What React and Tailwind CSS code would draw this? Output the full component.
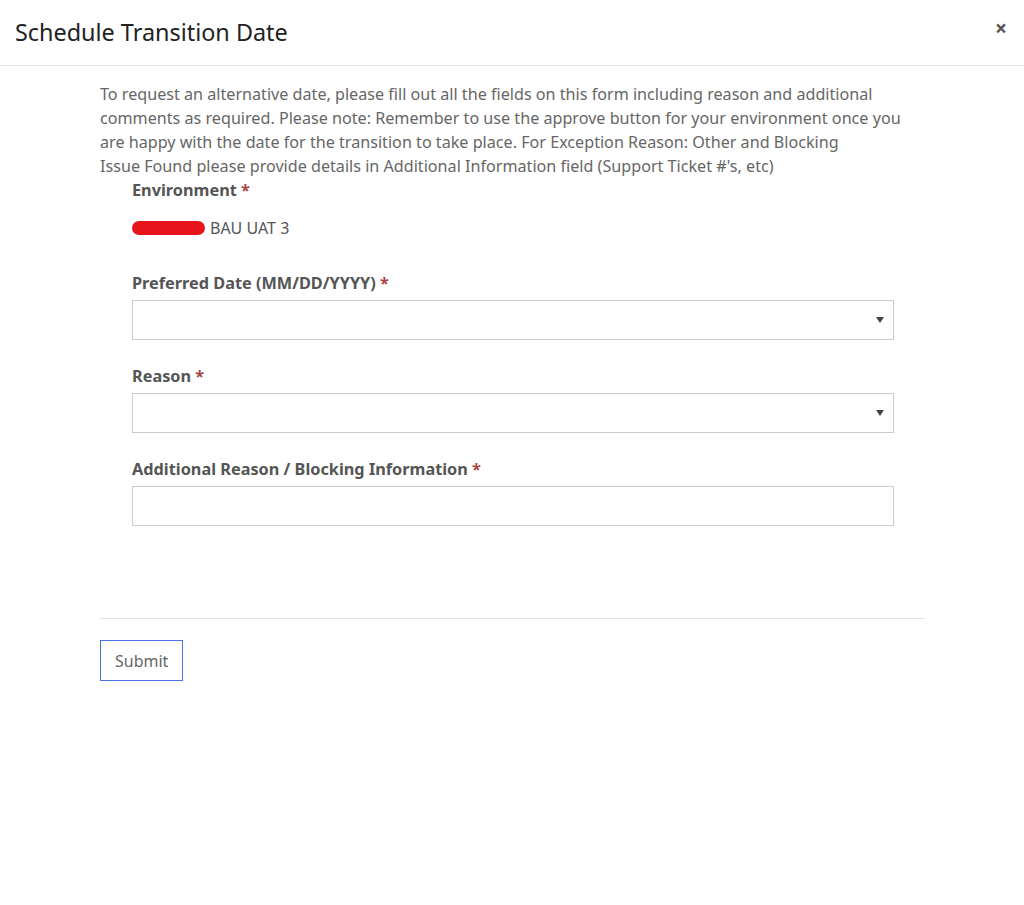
import React from 'react'

const font = { fontFamily: '"Noto Sans", "Open Sans", sans-serif' }

function Label({ children }) {
    return (
        <div className="text-[16.3px] font-bold text-[#555] leading-6">
            {children} <span className="text-[#a94442]">*</span>
        </div>
    )
}

function SelectBox() {
    return (
        <div className="mt-[5px] h-10 w-[762px] border border-[#ccc] bg-white flex items-center justify-end pr-[9px]">
            <svg width="8" height="6" viewBox="0 0 8 6">
                <path d="M0 0 H8 L4 6 Z" fill="#444" />
            </svg>
        </div>
    )
}

export default function App() {
    return (
        <div className="w-[1024px] h-[905px] bg-white relative" style={font}>
            {/* Header */}
            <div className="h-[66px] border-b border-[#e5e5e5] flex items-center justify-between pl-[15px] pr-[17px]">
                <h1 className="text-[23.4px] text-[#222] font-normal leading-none mt-[1px]">Schedule Transition Date</h1>
                <button className="text-[21px] text-[#555] font-bold leading-none -mt-[8px]">×</button>
            </div>

            {/* Body */}
            <div className="pl-[100px] pr-[99px] pt-[16px]">
                <p className="text-[16.15px] leading-6 text-[#666]">
                    To request an alternative date, please fill out all the fields on this form including reason and additional<br />
                    comments as required. Please note: Remember to use the approve button for your environment once you<br />
                    are happy with the date for the transition to take place. For Exception Reason: Other and Blocking<br />
                    Issue Found please provide details in Additional Information field (Support Ticket #'s, etc)
                </p>

                <div className="pl-[32px]">
                    <Label>Environment</Label>
                    <div className="mt-[14px] flex items-center text-[16px] text-[#555] leading-6">
                        <span className="inline-block w-[73px] h-[14px] bg-[#e8141c] rounded-full mr-[5px]" />
                        BAU UAT 3
                    </div>

                    <div className="mt-[31px]">
                        <Label>Preferred Date (MM/DD/YYYY)</Label>
                        <SelectBox />
                    </div>

                    <div className="mt-[24px]">
                        <Label>Reason</Label>
                        <SelectBox />
                    </div>

                    <div className="mt-[24px]">
                        <Label>Additional Reason / Blocking Information</Label>
                        <div className="mt-[5px] h-10 w-[762px] border border-[#ccc] bg-white" />
                    </div>
                </div>

                <div className="mt-[92px] border-t border-[#e5e5e5]" />

                <button className="mt-[21px] h-[41px] px-[14px] border border-[#4a73e8] text-[16px] text-[#666] bg-white">
                    Submit
                </button>
            </div>
        </div>
    )
}
